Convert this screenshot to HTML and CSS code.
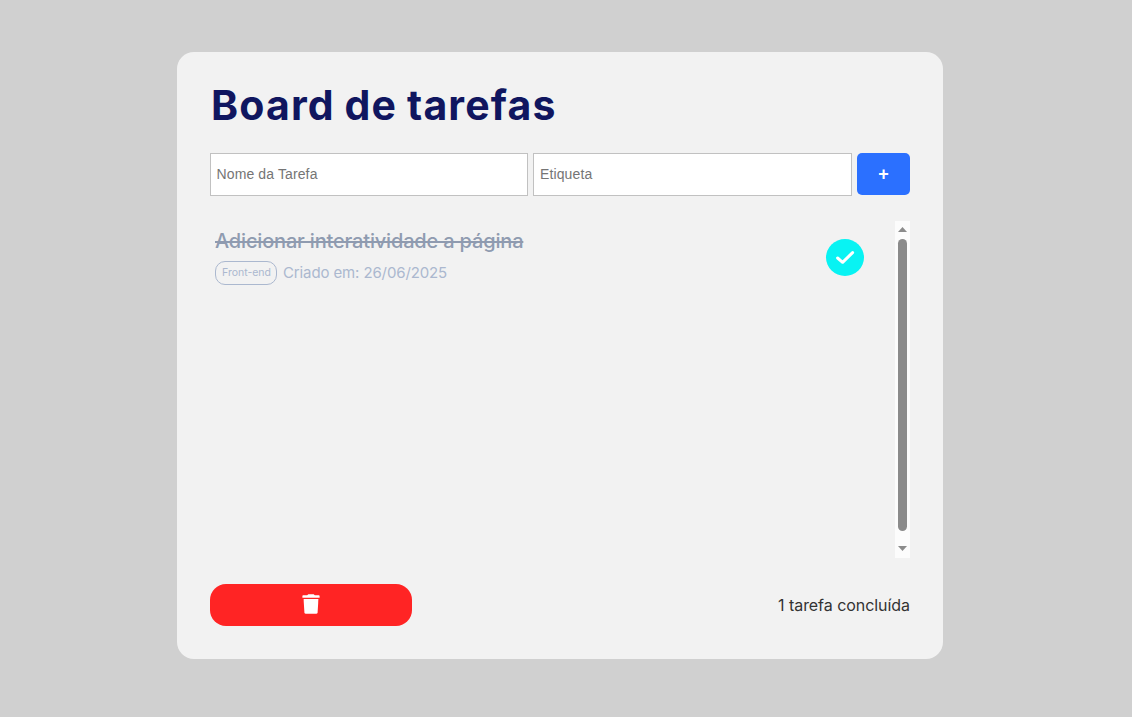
FILE: index.html
```html
<!DOCTYPE html>
<html lang="pt-BR">
<head>
<meta charset="UTF-8">
<title>Board de tarefas</title>
<link rel="stylesheet" href="styles.css">
</head>
<body>
<main class="board">
  <h1 class="title">Board de tarefas</h1>
  <form class="form">
    <input class="field field-name" type="text" placeholder="Nome da Tarefa">
    <input class="field" type="text" placeholder="Etiqueta">
    <button class="add" type="button">+</button>
  </form>
  <section class="list">
    <div class="tasks">
      <article class="task">
        <div class="info">
          <h2 class="name">Adicionar interatividade a página</h2>
          <div class="meta"><span class="tag">Front-end</span><span class="date">Criado em: 26/06/2025</span></div>
        </div>
        <div class="check">
          <svg width="20" height="15" viewBox="0 0 20 15"><path d="M2.6 8 L7.6 12.3 L17.6 2.6" fill="none" stroke="#fff" stroke-width="3" stroke-linecap="round" stroke-linejoin="round"/></svg>
        </div>
      </article>
    </div>
    <div class="scrollbar">
      <svg width="9" height="5" viewBox="0 0 9 5"><path d="M0 5L4.5 0L9 5Z" fill="#8b8b8b"/></svg>
      <div class="thumb"></div>
      <svg width="9" height="5" viewBox="0 0 9 5"><path d="M0 0L4.5 5L9 0Z" fill="#8b8b8b"/></svg>
    </div>
  </section>
  <footer class="footer">
    <button class="clear" type="button" aria-label="Limpar">
      <svg width="18" height="20" viewBox="0 0 18 20" fill="#fff"><path d="M1.2 1.2H5.2L6.3 0.2H11.7L12.8 1.2H16.8Q17.6 1.2 17.6 2V3.8H0.4V2Q0.4 1.2 1.2 1.2Z"/><path d="M1.6 5H16.4L15.6 18.4Q15.5 19.8 14.1 19.8H3.9Q2.5 19.8 2.4 18.4Z"/></svg>
    </button>
    <p class="count">1 tarefa concluída</p>
  </footer>
</main>
</body>
</html>
```
FILE: styles.css
```css
* { box-sizing: border-box; margin: 0; padding: 0; }
body {
  height: 717px;
  padding: 52px 0 0 177px;
  background: #d0d0d0;
  font-family: Inter, sans-serif;
  overflow: hidden;
}
.board {
  width: 766px;
  height: 607px;
  padding: 33px;
  border-radius: 17px;
  background: #f2f2f2;
}
.title {
  height: 68px;
  padding-left: 1px;
  font: 700 41px/41px Inter, sans-serif;
  letter-spacing: 1.15px;
  word-spacing: -1px;
  color: #10165f;
  white-space: nowrap;
}
.form { display: flex; gap: 5px; height: 43px; }
.field {
  flex: 1;
  min-width: 0;
  padding: 0 6px 2px;
  border: 1px solid #c1c1c1;
  border-radius: 0;
  background: #fff;
  font: 14px "Liberation Sans", Arial, sans-serif;
  letter-spacing: 0.12px;
}
.field-name { flex: 0 0 318px; padding-left: 5.5px; }
.field::placeholder { color: #757575; }
.add {
  width: 53px;
  height: 42px;
  border: 0;
  border-radius: 5px;
  background: #2b70ff;
  color: #fff;
  font: 700 18px "Liberation Sans", Arial, sans-serif;
}
.list { display: flex; height: 337px; margin-top: 25px; }
.tasks { flex: 1; padding: 8px 31px 0 5px; }
.task { display: flex; justify-content: space-between; }
.name {
  font-size: 20px;
  line-height: 24px;
  font-weight: 500;
  letter-spacing: -0.17px;
  color: #8f9bb0;
  text-decoration: line-through;
}
.meta { display: flex; align-items: center; gap: 6px; margin-top: 8px; }
.tag {
  width: 62px;
  height: 24px;
  padding-left: 1px;
  border: 1px solid #abb8cf;
  border-radius: 10px;
  font-size: 10.5px;
  line-height: 21px;
  text-align: center;
  color: #abb8cf;
}
.date { font-size: 15px; line-height: 24px; letter-spacing: -0.12px; color: #abb8cf; }
.check {
  display: flex;
  align-items: center;
  justify-content: center;
  width: 38px;
  height: 37px;
  margin-top: 10px;
  border-radius: 50%;
  background: #08f3f3;
}
.scrollbar {
  display: flex;
  flex-direction: column;
  align-items: center;
  width: 15px;
  padding: 6px 0 7px;
  background: #fcfcfc;
}
.thumb {
  flex: 1;
  width: 9px;
  margin: 7px 0 15px;
  border-radius: 5px;
  background: #8b8b8b;
}
.footer {
  display: flex;
  align-items: center;
  justify-content: space-between;
  height: 42px;
  margin-top: 26px;
}
.clear {
  display: flex;
  align-items: center;
  justify-content: center;
  width: 202px;
  height: 42px;
  padding-bottom: 2px;
  border: 0;
  border-radius: 16px;
  background: #ff2424;
}
.count { font-size: 16px; line-height: 24px; letter-spacing: -0.05px; color: #333; }
```
